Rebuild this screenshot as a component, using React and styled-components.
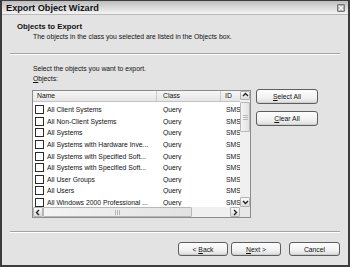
import React from 'react';
import styled, { createGlobalStyle } from 'styled-components';

const GlobalStyle = createGlobalStyle`
  body {
    margin: 0;
    font-family: "Liberation Sans", Arial, sans-serif;
    font-size: 6.8px;
    color: #111;
    background: #fff;
  }
`;

const Window = styled.div`
  width: 350px;
  height: 267px;
  box-sizing: border-box;
  border: 2px solid #3c3c3c;
  border-top-width: 1px;
  background: #e3e3e3;
  display: flex;
  flex-direction: column;
  overflow: hidden;
`;

const TitleBar = styled.div`
  height: 14px;
  flex: none;
  display: flex;
  align-items: center;
  justify-content: space-between;
  padding: 0 3px 0 4px;
  background: linear-gradient(#bdbdbd, #dedede 55%, #f2f2f2 90%, #9a9a9a);
`;

const Title = styled.span`
  font-size: 9.2px;
  font-weight: bold;
  color: #111;
`;

const CloseButton = styled.div`
  width: 8px;
  height: 8px;
  box-sizing: border-box;
  border: 1px solid #7a7a7a;
  border-radius: 1px;
  background: #a8a8a8;
  display: flex;
  align-items: center;
  justify-content: center;
`;

const Header = styled.div`
  padding: 7px 0 0 15px;
  flex: none;
`;

const HeaderTitle = styled.div`
  font-size: 7.8px;
  font-weight: bold;
  line-height: 10px;
`;

const HeaderText = styled.div`
  line-height: 10px;
  padding-left: 16px;
`;

const Separator = styled.div`
  flex: none;
  margin: ${(p) => p.$top}px 8px 0;
  border-top: 1px solid #a3a3a3;
  border-bottom: 1px solid #fff;
`;

const Main = styled.div`
  flex: none;
  padding: 9px 0 0 30px;
`;

const Label = styled.div`
  line-height: 10px;
  padding-left: 1px;
`;

const Key = styled.span`
  text-decoration: underline;
`;

const ListRow = styled.div`
  display: flex;
  gap: 5px;
  margin-top: 6px;
  align-items: flex-start;
`;

const ListBox = styled.div`
  width: 219px;
  height: 128px;
  box-sizing: border-box;
  border: 1px solid #8c8c8c;
  background: #fff;
  display: grid;
  grid-template-columns: 207px 10px;
  grid-template-rows: 116px 10px;
`;

const ListArea = styled.div`
  overflow: hidden;
  position: relative;
`;

const HeadRow = styled.div`
  display: flex;
  height: 11px;
  background: linear-gradient(#f6f6f6, #e6e6e6);
  border-bottom: 1px solid #c4c4c4;
  box-sizing: border-box;
`;

const HeadCell = styled.div`
  width: ${(p) => p.$w}px;
  flex: none;
  box-sizing: border-box;
  padding-left: 4px;
  line-height: 10px;
  border-right: 1px solid #c8c8c8;
  white-space: nowrap;
`;

const Rows = styled.div`
  padding-top: 2px;
`;

const Row = styled.div`
  display: flex;
  height: 11.6px;
  align-items: center;
  white-space: nowrap;
`;

const Cell = styled.div`
  width: ${(p) => p.$w}px;
  flex: none;
  box-sizing: border-box;
  padding-left: ${(p) => p.$pad}px;
  display: flex;
  align-items: center;
  overflow: hidden;
`;

const Check = styled.span`
  width: 9px;
  height: 9px;
  box-sizing: border-box;
  border: 1.5px solid #2a2a2a;
  background: #fff;
  margin-right: 3px;
  flex: none;
`;

const VScroll = styled.div`
  background: #f0f0f0;
  display: flex;
  flex-direction: column;
`;

const HScroll = styled.div`
  background: #f0f0f0;
  display: flex;
`;

const Corner = styled.div`
  background: #e8e8e8;
`;

const ArrowBtn = styled.div`
  width: 10px;
  height: ${(p) => p.$h || 10}px;
  flex: none;
  box-sizing: border-box;
  border: 1px solid #b4b4b4;
  border-radius: 1px;
  background: linear-gradient(#fbfbfb, #dcdcdc);
  display: flex;
  align-items: center;
  justify-content: center;
`;

const Thumb = styled.div`
  box-sizing: border-box;
  border: 1px solid #b8b8b8;
  border-radius: 1px;
  background: linear-gradient(90deg, #f4f4f4, #e2e2e2);
  display: flex;
  align-items: center;
  justify-content: center;
  ${(p) => (p.$vertical ? 'height: 30px; margin-top: 2px;' : 'width: 149px;')}
`;

const Grip = styled.div`
  width: ${(p) => (p.$vertical ? 5 : 5)}px;
  height: 5px;
  background: repeating-linear-gradient(
    ${(p) => (p.$vertical ? '180deg' : '90deg')},
    #b8b8b8 0 1px,
    transparent 1px 2px
  );
`;

const Spacer = styled.div`
  flex: 1;
`;

const SideButtons = styled.div`
  display: flex;
  flex-direction: column;
  gap: 7px;
  margin-top: -1px;
`;

const Button = styled.button`
  width: ${(p) => p.$w}px;
  height: ${(p) => p.$h}px;
  box-sizing: border-box;
  padding: 0;
  border: 1px solid #5e5e5e;
  border-radius: 3px;
  background: linear-gradient(#fdfdfd, #f2f2f2 60%, #dcdcdc);
  font-family: "Liberation Sans", Arial, sans-serif;
  font-size: 6.8px;
  color: #111;
  box-shadow: inset 0 -1px 0 #cfcfcf;
`;

const Footer = styled.div`
  display: flex;
  justify-content: flex-end;
  padding: 9px 8px 0 0;
  gap: 3px;
`;

const CancelButton = styled(Button)`
  margin-left: 5px;
`;

const Chevron = ({ dir }) => {
  const paths = {
    up: 'M1 4 L3.5 1.5 L6 4',
    down: 'M1 2 L3.5 4.5 L6 2',
    left: 'M4 1 L1.5 3.5 L4 6',
    right: 'M2 1 L4.5 3.5 L2 6',
  };
  return (
    <svg width="7" height="7" viewBox="0 0 7 7">
      <path d={paths[dir]} fill="none" stroke="#222" strokeWidth="1.4" />
    </svg>
  );
};

const objects = [
  ['All Client Systems', 'SMS00001'],
  ['All Non-Client Systems', 'SMS00002'],
  ['All Systems', 'SMS00003'],
  ['All Systems with Hardware Inve...', 'SMS00004'],
  ['All Systems with Specified Soft...', 'SMS00005'],
  ['All Systems with Specified Soft...', 'SMS00006'],
  ['All User Groups', 'SMS00007'],
  ['All Users', 'SMS00008'],
  ['All Windows 2000 Professional ...', 'SMS00009'],
];

export default function App() {
  return (
    <>
      <GlobalStyle />
      <Window>
        <TitleBar>
          <Title>Export Object Wizard</Title>
          <CloseButton>
            <svg width="6" height="6" viewBox="0 0 6 6">
              <path d="M1 1 L5 5 M5 1 L1 5" stroke="#fff" strokeWidth="1.3" />
            </svg>
          </CloseButton>
        </TitleBar>

        <Header>
          <HeaderTitle>Objects to Export</HeaderTitle>
          <HeaderText>The objects in the class you selected are listed in the Objects box.</HeaderText>
        </Header>
        <Separator $top={11} />

        <Main>
          <Label>Select the objects you want to export.</Label>
          <Label>
            <Key>O</Key>bjects:
          </Label>
          <ListRow>
            <ListBox>
              <ListArea>
                <HeadRow>
                  <HeadCell $w={124}>Name</HeadCell>
                  <HeadCell $w={64} style={{ paddingLeft: 6 }}>Class</HeadCell>
                  <HeadCell $w={60}>ID</HeadCell>
                </HeadRow>
                <Rows>
                  {objects.map(([name, id], i) => (
                    <Row key={i}>
                      <Cell $w={124} $pad={2}>
                        <Check />
                        {name}
                      </Cell>
                      <Cell $w={64} $pad={6}>Query</Cell>
                      <Cell $w={60} $pad={5}>{id}</Cell>
                    </Row>
                  ))}
                </Rows>
              </ListArea>
              <VScroll>
                <ArrowBtn $h={9}>
                  <Chevron dir="up" />
                </ArrowBtn>
                <Thumb $vertical>
                  <Grip $vertical />
                </Thumb>
                <Spacer />
                <ArrowBtn>
                  <Chevron dir="down" />
                </ArrowBtn>
              </VScroll>
              <HScroll>
                <ArrowBtn>
                  <Chevron dir="left" />
                </ArrowBtn>
                <Thumb>
                  <Grip />
                </Thumb>
                <Spacer />
                <ArrowBtn>
                  <Chevron dir="right" />
                </ArrowBtn>
              </HScroll>
              <Corner />
            </ListBox>
            <SideButtons>
              <Button $w={62} $h={15}>
                <Key>S</Key>elect All
              </Button>
              <Button $w={62} $h={15}>
                <Key>C</Key>lear All
              </Button>
            </SideButtons>
          </ListRow>
        </Main>

        <Separator $top={13} />
        <Footer>
          <Button $w={50} $h={14}>
            &lt; <Key>B</Key>ack
          </Button>
          <Button $w={50} $h={14}>
            <Key>N</Key>ext &gt;
          </Button>
          <CancelButton $w={51} $h={14}>Cancel</CancelButton>
        </Footer>
      </Window>
    </>
  );
}
